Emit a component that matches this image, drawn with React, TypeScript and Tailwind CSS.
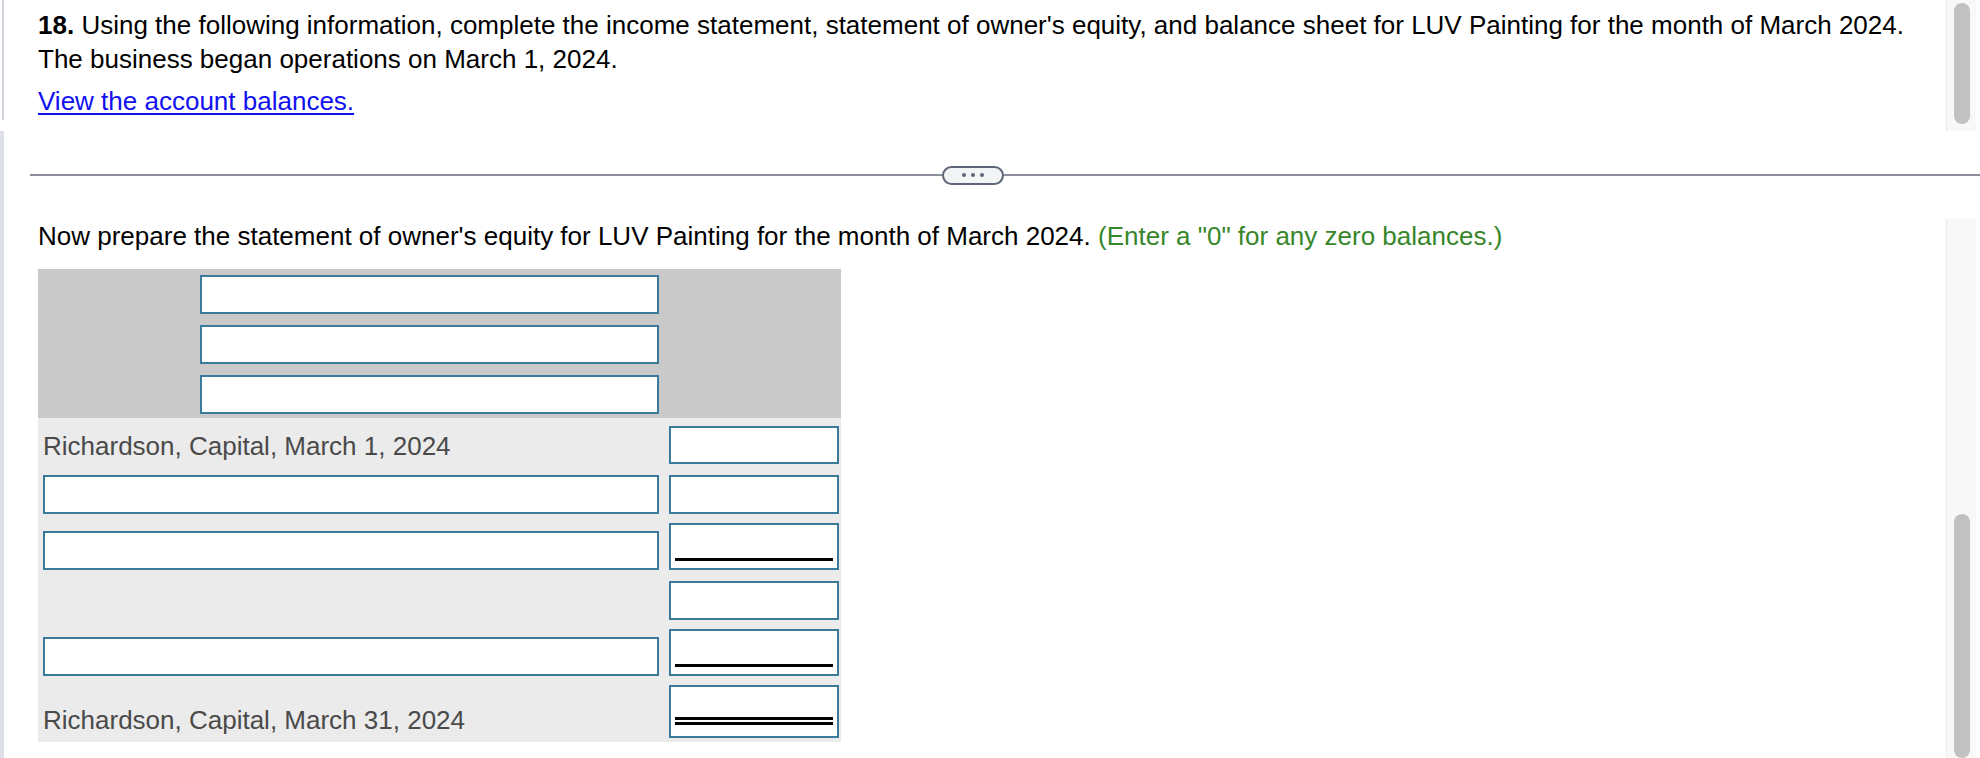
import React from 'react'

const box = 'bg-white border-2 border-[#3a7a9b]'

function Scrollbar({ thumb }: { thumb: string }) {
  return (
    <div className="w-[30px] mr-[4px] shrink-0 bg-[#f8f8f8] border-l border-[#ececec] flex flex-col items-center">
      <div className={`w-[16px] rounded-full bg-[#c1c1c1] ${thumb}`} />
    </div>
  )
}

function AmountBox({ h, lines = 0 }: { h: string; lines?: number }) {
  return (
    <div className={`w-[170px] ${h} ${box} flex flex-col justify-end px-[4px] pb-[7px]`}>
      {lines === 1 && <div className="h-[3px] bg-black" />}
      {lines === 2 && (
        <div className="flex flex-col gap-[2px] pb-[4px]">
          <div className="h-[3px] bg-black" />
          <div className="h-[3px] bg-black" />
        </div>
      )}
    </div>
  )
}

export default function App() {
  return (
    <div className="w-[1980px] h-[758px] overflow-hidden bg-white text-black font-['Liberation_Sans',Arial,sans-serif] flex flex-col">
      {/* question */}
      <div className="h-[131px] shrink-0 flex">
        <div className="flex-1 ml-[2px] mb-[11px] border-l-2 border-[#d3d6dd] pl-[34px] pt-[8px] text-[26px] leading-[34px]">
          <p className="whitespace-nowrap">
            <span className="font-bold">18.</span> Using the following information, complete the income statement, statement of owner's equity, and balance sheet for LUV Painting for the month of March 2024.
            <br />
            The business began operations on March 1, 2024.
          </p>
          <a className="inline-block mt-[8px] text-[#1010f0] underline underline-offset-[3px]" href="#">
            View the account balances.
          </a>
        </div>
        <Scrollbar thumb="mt-[3px] h-[121px]" />
      </div>

      {/* divider */}
      <div className="h-[88px] shrink-0 flex items-center pl-[26px] border-l-4 border-[#dde0e6]">
        <div className="w-[912px] h-[2px] bg-[#8b8e9c]" />
        <div className="w-[62px] h-[19px] rounded-full border-2 border-[#5d6676] bg-[#f3f4f6] flex items-center justify-center gap-[5px]">
          <span className="w-[4px] h-[4px] rounded-full bg-[#5d6676]" />
          <span className="w-[4px] h-[4px] rounded-full bg-[#5d6676]" />
          <span className="w-[4px] h-[4px] rounded-full bg-[#5d6676]" />
        </div>
        <div className="flex-1 h-[2px] bg-[#8b8e9c]" />
      </div>

      {/* answer */}
      <div className="flex-1 min-h-0 overflow-hidden flex border-l-4 border-[#dde0e6]">
        <div className="flex-1 pl-[34px]">
          <p className="text-[26px] leading-[34px] whitespace-nowrap">
            Now prepare the statement of owner's equity for LUV Painting for the month of March 2024.{' '}
            <span className="text-[#37862a]">(Enter a "0" for any zero balances.)</span>
          </p>

          <div className="mt-[16px] w-[803px]">
            {/* heading inputs */}
            <div className="bg-[#c9c9c9] pl-[162px] pt-[6px] pb-[4px] flex flex-col gap-[11px]">
              <div className={`w-[459px] h-[39px] ${box}`} />
              <div className={`w-[459px] h-[39px] ${box}`} />
              <div className={`w-[459px] h-[39px] ${box}`} />
            </div>

            {/* body */}
            <div className="bg-[#ebebeb] pl-[5px] pt-[8px] pb-[4px] text-[26px] leading-[34px] text-[#4a4a4a]">
              <div className="flex items-end gap-[10px]">
                <div className="w-[616px] pb-[1px]">Richardson, Capital, March 1, 2024</div>
                <AmountBox h="h-[38px]" />
              </div>
              <div className="mt-[11px] flex items-end gap-[10px]">
                <div className={`w-[616px] h-[39px] ${box}`} />
                <AmountBox h="h-[39px]" />
              </div>
              <div className="mt-[9px] flex items-end gap-[10px]">
                <div className={`w-[616px] h-[39px] ${box}`} />
                <AmountBox h="h-[47px]" lines={1} />
              </div>
              <div className="mt-[11px] flex items-end gap-[10px]">
                <div className="w-[616px]" />
                <AmountBox h="h-[39px]" />
              </div>
              <div className="mt-[9px] flex items-end gap-[10px]">
                <div className={`w-[616px] h-[39px] ${box}`} />
                <AmountBox h="h-[47px]" lines={1} />
              </div>
              <div className="mt-[9px] flex items-end gap-[10px]">
                <div className="w-[616px] pb-[1px]">Richardson, Capital, March 31, 2024</div>
                <AmountBox h="h-[53px]" lines={2} />
              </div>
            </div>
          </div>
        </div>
        <Scrollbar thumb="mt-[295px] flex-1" />
      </div>
    </div>
  )
}
